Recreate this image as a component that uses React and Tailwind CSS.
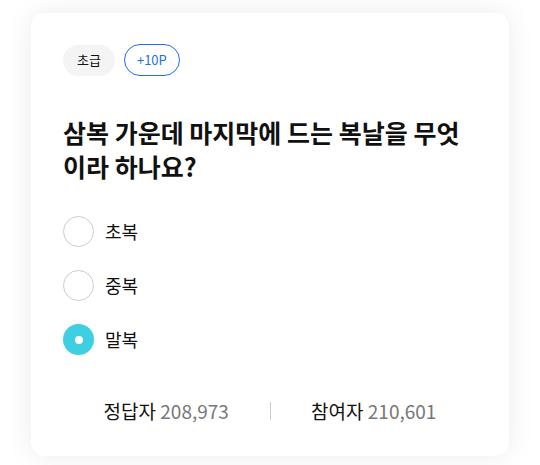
import React from 'react';

const options = [
  { label: '초복', checked: false },
  { label: '중복', checked: false },
  { label: '말복', checked: true },
];

const Radio = ({ checked }) =>
  checked ? (
    <span className="w-[31px] h-[31px] rounded-full bg-[#3fcfe2] flex items-center justify-center">
      <span className="w-[8px] h-[8px] rounded-full bg-white"></span>
    </span>
  ) : (
    <span className="w-[31px] h-[31px] rounded-full border border-[#cccccc] bg-white"></span>
  );

export default function App() {
  return (
    <div className="w-[540px] h-[465px] bg-white pt-[13px] pl-[31px] font-['Noto_Sans_CJK_KR','Noto_Sans',sans-serif]">
      <div className="w-[478px] h-[443px] bg-white rounded-[14px] shadow-[0_0_28px_rgba(0,0,0,0.08)] pt-[31px] px-[32px] flex flex-col">
        {/* Badges */}
        <div className="flex items-center gap-[9px]">
          <span className="h-[31px] px-[14px] rounded-full bg-[#f4f4f4] text-[13px] text-[#111] flex items-center">
            초급
          </span>
          <span className="h-[32px] px-[12px] rounded-full border border-[#1a6ff0] text-[13px] text-[#1a6ff0] flex items-center">
            +10P
          </span>
        </div>

        {/* Question */}
        <h2 className="mt-[39px] text-[25px] leading-[34px] font-bold text-[#111]">
          삼복 가운데 마지막에 드는 복날을 무엇이라 하나요?
        </h2>

        {/* Options */}
        <div className="mt-[33px] flex flex-col gap-[23px]">
          {options.map((o) => (
            <label key={o.label} className="flex items-center gap-[11px]">
              <Radio checked={o.checked} />
              <span className="text-[18px] text-[#111]">{o.label}</span>
            </label>
          ))}
        </div>

        {/* Stats */}
        <div className="mt-[42px] flex items-center text-[19px]">
          <div className="flex-1 text-center">
            <span className="text-[#111]">정답자 </span>
            <span className="text-[#777]">208,973</span>
          </div>
          <span className="w-px h-[18px] bg-[#cccccc]"></span>
          <div className="flex-1 text-center">
            <span className="text-[#111]">참여자 </span>
            <span className="text-[#777]">210,601</span>
          </div>
        </div>
      </div>
    </div>
  );
}
